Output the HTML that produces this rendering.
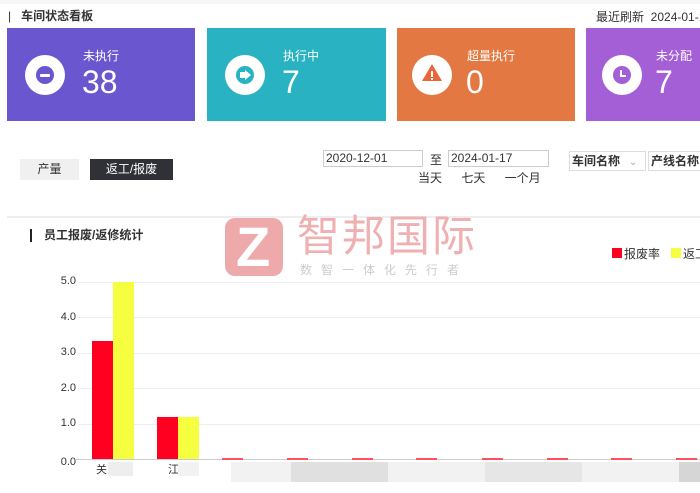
<!DOCTYPE html>
<html><head><meta charset="utf-8"><style>
*{margin:0;padding:0;box-sizing:border-box}
body{width:700px;height:493px;overflow:hidden;background:#fff;font-family:"Liberation Sans","Noto Sans CJK SC",sans-serif;position:relative;color:#333}
.a{position:absolute;white-space:nowrap}
.card{position:absolute;top:28px;height:93px}
.ic{position:absolute;left:18px;top:27px;width:40px;height:40px;border-radius:50%;background:#fff}
.in{position:absolute;left:11px;top:11px;width:18px;height:18px;border-radius:50%}
.lb{position:absolute;left:76px;top:19px;font-size:12px;color:#fff}
.num{position:absolute;left:75px;top:36px;font-size:32px;color:#fff;font-family:"Liberation Sans",sans-serif}
.grid{position:absolute;left:78px;width:622px;height:1px;background:#eee}
.yl{position:absolute;left:56px;font-size:11px;color:#333;width:20px;text-align:right}
.bar{position:absolute}
.btn{position:absolute;font-size:12px;text-align:center;line-height:21px}
.inp{position:absolute;top:150px;height:17px;border:1px solid #ccc;font-size:12px;line-height:15px;padding-left:2px;color:#333;white-space:nowrap;overflow:hidden}
</style></head><body>
<div class="a" style="left:0;top:0;width:700px;height:4px;background:#f6f6f6"></div>
<div class="a" style="left:8px;top:7px;font-size:12px;color:#333">|&nbsp;&nbsp;&nbsp;<b style="font-weight:bold">车间状态看板</b></div>
<div class="a" style="left:596px;top:8px;font-size:12px;color:#333">最近刷新&nbsp; 2024-01-17</div>

<div class="card" style="left:7px;width:188px;background:#6a57d0"><div class="ic"><div class="in" style="background:#6a57d0"><div class="a" style="left:4px;top:8px;width:10px;height:3px;background:#fff;border-radius:1px"></div></div></div><div class="lb">未执行</div><div class="num">38</div></div>
<div class="card" style="left:207px;width:179px;background:#29b3c2"><div class="ic"><div class="in" style="background:#29b3c2"><div class="a" style="left:4px;top:6px;width:5px;height:6px;background:#fff"></div><div class="a" style="left:9px;top:4px;width:0;height:0;border-left:6px solid #fff;border-top:5px solid transparent;border-bottom:5px solid transparent"></div></div></div><div class="lb">执行中</div><div class="num">7</div></div>
<div class="card" style="left:397px;width:178px;background:#e47842"><div class="ic" style="left:15px"><div class="a" style="left:10px;top:9px;width:0;height:0;border-left:10px solid transparent;border-right:10px solid transparent;border-bottom:17px solid #e8663a"></div><div class="a" style="left:19px;top:16px;width:2px;height:6px;background:#fff"></div><div class="a" style="left:19px;top:23px;width:2px;height:2px;background:#fff"></div></div><div class="lb" style="left:70px">超量执行</div><div class="num" style="left:69px">0</div></div>
<div class="card" style="left:586px;width:114px;background:#a45fd6"><div class="ic" style="left:16px"><div class="in" style="background:#a45fd6"><div class="a" style="left:7px;top:4px;width:2px;height:7px;background:#fff"></div><div class="a" style="left:7px;top:9px;width:6px;height:2px;background:#fff"></div></div></div><div class="lb" style="left:70px">未分配</div><div class="num" style="left:69px">7</div></div>

<div class="btn" style="left:20px;top:159px;width:59px;height:21px;background:#f0f0f0;color:#333">产量</div>
<div class="btn" style="left:90px;top:159px;width:83px;height:21px;background:#2f3136;color:#fff">返工/报废</div>
<div class="inp" style="left:323px;width:100px">2020-12-01</div>
<div class="a" style="left:430px;top:151px;font-size:12px">至</div>
<div class="inp" style="left:448px;width:101px">2024-01-17</div>
<div class="a" style="left:418px;top:169px;font-size:12px;word-spacing:16px">当天 七天 一个月</div>
<div class="inp" style="left:569px;top:151px;width:77px;height:20px;line-height:18px;font-weight:bold;border-color:#ddd">车间名称 <span style="color:#aaa;font-weight:normal;font-size:10px">&nbsp;&nbsp;⌄</span></div>
<div class="inp" style="left:648px;top:151px;width:60px;height:20px;line-height:18px;font-weight:bold;border-color:#ddd">产线名称</div>
<div class="a" style="left:7px;top:216px;width:693px;height:2px;background:#eceef2"></div>

<div class="a" style="left:30px;top:229px;width:2px;height:13px;background:#222"></div>
<div class="a" style="left:44px;top:226px;font-size:12px;font-weight:bold;color:#333">员工报废/返修统计</div>

<div class="a" style="left:225px;top:218px;width:58px;height:58px;border-radius:10px;background:#eea9ab"></div>
<div class="a" style="left:236px;top:214px;font-size:56px;color:#fff;font-weight:bold;line-height:66px">Z</div>
<div class="a" style="left:297px;top:212px;font-size:43px;color:#efb0b2;letter-spacing:2px;line-height:50px">智邦国际</div>
<div class="a" style="left:300px;top:261px;font-size:12px;color:#ccc;letter-spacing:9px">数智一体化先行者</div>

<div class="a" style="left:612px;top:248px;width:10px;height:10px;background:#ff0020"></div>
<div class="a" style="left:624px;top:245px;font-size:12px">报废率</div>
<div class="a" style="left:671px;top:248px;width:10px;height:10px;background:#f5ff40"></div>
<div class="a" style="left:683px;top:245px;font-size:12px">返工率</div>

<div class="grid" style="top:282px"></div><div class="grid" style="top:317px"></div><div class="grid" style="top:353px"></div><div class="grid" style="top:388px"></div><div class="grid" style="top:424px"></div>
<div class="a" style="left:76px;top:459px;width:624px;height:1px;background:#ccc"></div>
<div class="yl" style="top:275px">5.0</div><div class="yl" style="top:311px">4.0</div><div class="yl" style="top:346px">3.0</div><div class="yl" style="top:382px">2.0</div><div class="yl" style="top:417px">1.0</div><div class="yl" style="top:456px">0.0</div>

<div class="bar" style="left:92px;top:341px;width:21px;height:118px;background:#ff0020"></div>
<div class="bar" style="left:113px;top:282px;width:21px;height:177px;background:#f5ff40"></div>
<div class="bar" style="left:157px;top:417px;width:21px;height:42px;background:#ff0020"></div>
<div class="bar" style="left:178px;top:417px;width:21px;height:42px;background:#f5ff40"></div>
<div class="bar" style="left:222px;top:458px;width:21px;height:2px;background:#ff5060"></div>
<div class="bar" style="left:287px;top:458px;width:21px;height:2px;background:#ff5060"></div>
<div class="bar" style="left:352px;top:458px;width:21px;height:2px;background:#ff5060"></div>
<div class="bar" style="left:416px;top:458px;width:21px;height:2px;background:#ff5060"></div>
<div class="bar" style="left:482px;top:458px;width:21px;height:2px;background:#ff5060"></div>
<div class="bar" style="left:547px;top:458px;width:21px;height:2px;background:#ff5060"></div>
<div class="bar" style="left:611px;top:458px;width:21px;height:2px;background:#ff5060"></div>
<div class="bar" style="left:676px;top:458px;width:21px;height:2px;background:#ff5060"></div>

<div class="a" style="left:96px;top:461px;font-size:11px">关</div>
<div class="a" style="left:108px;top:462px;width:25px;height:14px;background:#eee"></div>
<div class="a" style="left:168px;top:461px;font-size:11px">江</div>
<div class="a" style="left:178px;top:462px;width:21px;height:14px;background:#f2f2f2"></div>
<div class="a" style="left:231px;top:462px;width:60px;height:20px;background:#f2f2f2"></div>
<div class="a" style="left:291px;top:462px;width:97px;height:20px;background:#e0e0e0"></div>
<div class="a" style="left:388px;top:462px;width:97px;height:20px;background:#f2f2f2"></div>
<div class="a" style="left:485px;top:462px;width:97px;height:20px;background:#e6e6e6"></div>
<div class="a" style="left:582px;top:462px;width:97px;height:20px;background:#f2f2f2"></div>
<div class="a" style="left:679px;top:462px;width:21px;height:20px;background:#d6d6d6"></div>
</body></html>
